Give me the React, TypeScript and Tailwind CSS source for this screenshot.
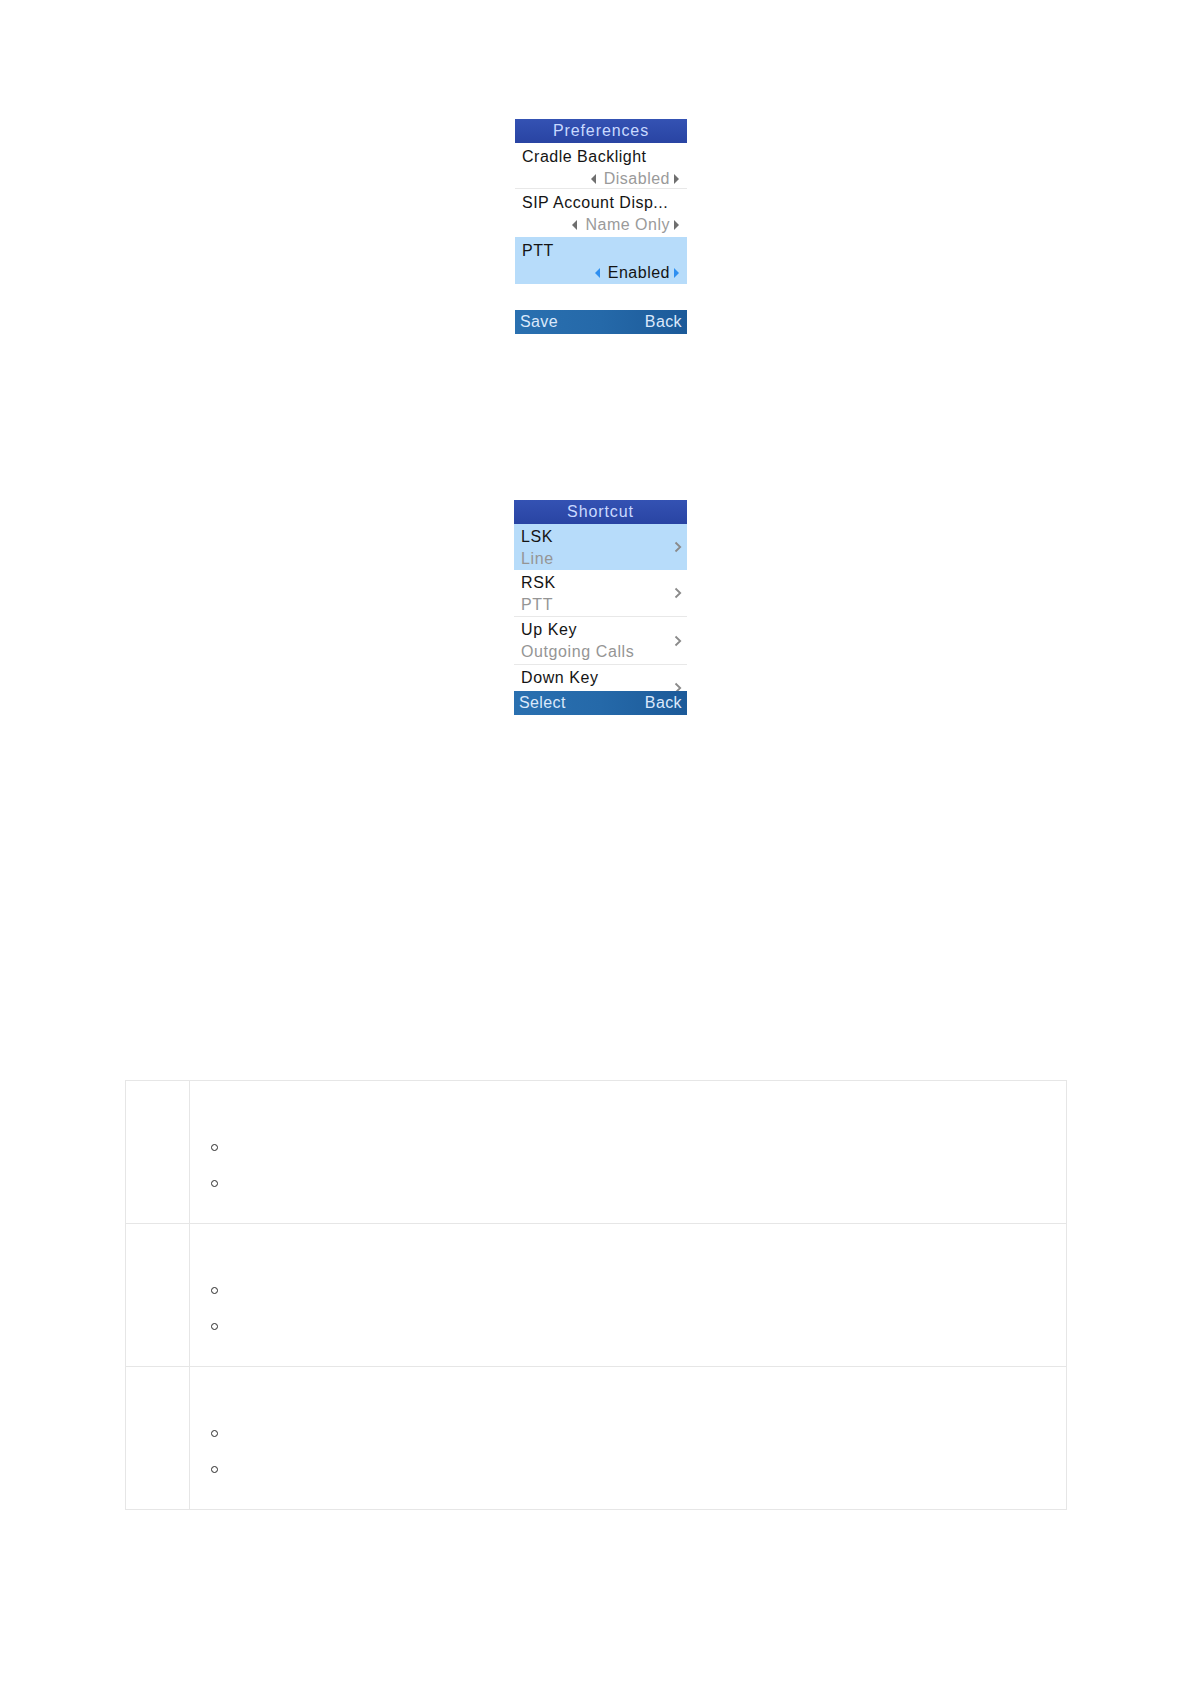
import React from "react";

const FONT = { fontFamily: '"Liberation Sans", Arial, sans-serif' };

function LeftTri({ color }: { color: string }) {
  return (
    <svg width="5" height="10" viewBox="0 0 5 10" className="shrink-0">
      <polygon points="5,0 0,5 5,10" fill={color} />
    </svg>
  );
}
function RightTri({ color }: { color: string }) {
  return (
    <svg width="5" height="10" viewBox="0 0 5 10" className="shrink-0">
      <polygon points="0,0 5,5 0,10" fill={color} />
    </svg>
  );
}
function Chevron() {
  return (
    <svg width="8" height="12" viewBox="0 0 8 12" className="shrink-0">
      <polyline points="1.5,1.5 6.2,6 1.5,10.5" fill="none" stroke="#8a8a8a" strokeWidth="1.8" />
    </svg>
  );
}

function PrefRow({
  label,
  value,
  selected,
  h,
  sep,
}: {
  label: string;
  value: string;
  selected?: boolean;
  h: string;
  sep?: boolean;
}) {
  const arrow = selected ? "#2f8ff0" : "#6f6f6f";
  return (
    <div
      className={`${h} flex flex-col pt-[3.5px] overflow-hidden ${selected ? "bg-[#b7dcfa]" : "bg-white"} ${sep ? "border-b border-[#e8e8e8]" : ""}`}
    >
      <div className="pl-[7px] leading-[20px] text-[16px] tracking-[0.5px] text-[#141414] whitespace-nowrap">{label}</div>
      <div className="flex items-center justify-end pr-[8px] leading-[24px] h-[24px]">
        <LeftTri color={arrow} />
        <span
          className={`ml-[8px] mr-[4px] text-[16px] tracking-[0.5px] ${selected ? "text-[#141414]" : "text-[#9a9a9a]"}`}
        >
          {value}
        </span>
        <RightTri color={arrow} />
      </div>
    </div>
  );
}

function ShortRow({
  label,
  sub,
  selected,
  h,
  sep,
}: {
  label: string;
  sub: string;
  selected?: boolean;
  h: string;
  sep?: boolean;
}) {
  return (
    <div
      className={`${h} shrink-0 flex items-center justify-between pr-[5px] overflow-hidden ${selected ? "bg-[#b7dcfa]" : "bg-white"} ${sep ? "border-b border-[#e8e8e8]" : ""}`}
    >
      <div className="flex flex-col self-start pt-[2.5px] pl-[7px]">
        <div className="leading-[20px] text-[16px] tracking-[0.6px] text-[#141414] whitespace-nowrap">{label}</div>
        <div className="leading-[24px] text-[16px] tracking-[0.6px] text-[#959595] whitespace-nowrap">{sub}</div>
      </div>
      <Chevron />
    </div>
  );
}

function Header({ title }: { title: string }) {
  return (
    <div className="h-[24px] flex items-center justify-center bg-gradient-to-b from-[#3452b3] to-[#2944a3] text-[#c9d9ff] text-[16px] tracking-[0.9px] leading-none">
      {title}
    </div>
  );
}

function Footer({ left }: { left: string }) {
  return (
    <div className="h-[24px] flex items-center justify-between px-[5px] bg-gradient-to-r from-[#2a70b0] via-[#2569a9] to-[#1c5a99] text-[#dbe8fb] text-[16px] tracking-[0.4px] leading-none">
      <span>{left}</span>
      <span>Back</span>
    </div>
  );
}

function BulletCell() {
  return (
    <div className="flex-1 flex flex-col pl-[21px] pt-[63px]">
      <div className="w-[7px] h-[7px] rounded-full border border-[#2a2a2a]" />
      <div className="w-[7px] h-[7px] rounded-full border border-[#2a2a2a] mt-[29px]" />
    </div>
  );
}

export default function App() {
  return (
    <div className="w-[1190px] min-h-[1684px] bg-white flex flex-col" style={FONT}>
      {/* Preferences screen */}
      <div className="ml-[515px] mt-[119px] w-[172px] flex flex-col">
        <Header title="Preferences" />
        <PrefRow label="Cradle Backlight" value="Disabled" h="h-[46px]" sep />
        <PrefRow label="SIP Account Disp..." value="Name Only" h="h-[48px]" />
        <PrefRow label="PTT" value="Enabled" h="h-[47px]" selected />
        <div className="h-[26px] bg-white" />
        <Footer left="Save" />
      </div>

      {/* Shortcut screen */}
      <div className="ml-[514px] mt-[166px] w-[173px] flex flex-col">
        <Header title="Shortcut" />
        <div className="h-[167px] flex flex-col overflow-hidden">
          <ShortRow label="LSK" sub="Line" h="h-[46px]" selected />
          <ShortRow label="RSK" sub="PTT" h="h-[47px]" sep />
          <ShortRow label="Up Key" sub="Outgoing Calls" h="h-[48px]" sep />
          <ShortRow label="Down Key" sub="" h="h-[46px]" />
        </div>
        <Footer left="Select" />
      </div>

      {/* Table */}
      <div className="ml-[125px] mt-[365px] w-[942px] border-t border-l border-r border-[#e6e6e6] flex flex-col">
        {[0, 1, 2].map((i) => (
          <div key={i} className="h-[143px] flex border-b border-[#e6e6e6]">
            <div className="w-[64px] border-r border-[#e6e6e6]" />
            <BulletCell />
          </div>
        ))}
      </div>
    </div>
  );
}
